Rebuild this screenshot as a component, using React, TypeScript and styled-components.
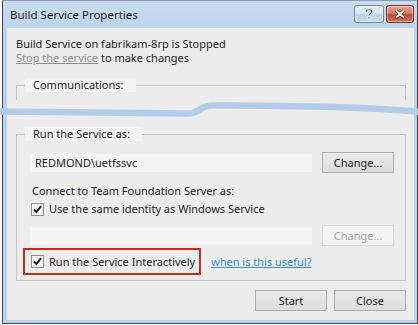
import React from 'react';
import styled, { createGlobalStyle } from 'styled-components';

const GlobalStyle = createGlobalStyle`
  html, body {
    margin: 0;
    padding: 0;
    background: #ffffff;
  }
  body {
    font-family: 'Noto Sans', 'Open Sans', sans-serif;
    font-size: 11px;
    color: #1e1e1e;
  }
`;

const Page = styled.div`
  position: relative;
  width: 418px;
  height: 325px;
  overflow: hidden;
`;

const Window = styled.div`
  box-sizing: border-box;
  margin-left: 2px;
  width: 416px;
  height: 324px;
  border: 1px solid #3c4654;
  border-top-color: #8c9db3;
  padding: 0 3px 3px 4px;
  display: flex;
  flex-direction: column;
  background: linear-gradient(#c9dcf1, #bcd2ec 30px, #bcd2ec);
`;

const TitleBar = styled.div`
  height: 27px;
  display: flex;
  align-items: flex-start;
`;

const Title = styled.div`
  padding: 6px 0 0 3px;
  line-height: 15px;
  font-size: 11.5px;
  color: #1e1e1e;
`;

const Caption = styled.div`
  margin-left: auto;
  margin-top: 4px;
  display: flex;
  gap: 2px;
`;

const CaptionButton = styled.div<{ $danger?: boolean }>`
  box-sizing: border-box;
  width: ${(p) => (p.$danger ? 28 : 30)}px;
  height: 18px;
  border: 1px solid ${(p) => (p.$danger ? '#7a3024' : '#6f86a3')};
  border-radius: 3px;
  display: flex;
  align-items: center;
  justify-content: center;
  background: ${(p) =>
    p.$danger
      ? 'linear-gradient(#e7a894, #d57a62 45%, #c34a33 55%, #d27055)'
      : 'linear-gradient(#e6eff9, #d4e2f3 45%, #bfd1e8 55%, #cbdcef)'};
  box-shadow: inset 0 0 0 1px rgba(255, 255, 255, 0.45);
`;

const Client = styled.div`
  flex: 1;
  background: #ececec;
  display: flex;
  flex-direction: column;
`;

const Status = styled.div`
  padding: 9px 0 0 9px;
  line-height: 14px;
`;

const MutedLink = styled.span`
  color: #8d8d8d;
  text-decoration: underline;
`;

const Group = styled.fieldset<{ $open?: boolean }>`
  margin: ${(p) => (p.$open ? '13px' : '27px')} 8px 0 9px;
  padding: 0;
  min-width: 0;
  border: 1px solid #c3c3c3;
  border-bottom: ${(p) => (p.$open ? 'none' : '1px solid #c3c3c3')};
  ${(p) => (p.$open ? 'height: 21px;' : '')}
`;

const Legend = styled.legend`
  margin-left: 8px;
  padding: 0 12px 0 8px;
  line-height: 14px;
  background: #f3f3f3;
`;

const FieldRow = styled.div<{ $top: number }>`
  display: flex;
  align-items: center;
  gap: 10px;
  margin-top: ${(p) => p.$top}px;
  padding-left: 13px;
`;

const TextField = styled.div<{ $disabled?: boolean }>`
  box-sizing: border-box;
  width: 282px;
  height: 18px;
  padding-left: 5px;
  line-height: 18px;
  background: #f5f5f5;
  color: ${(p) => (p.$disabled ? '#a0a0a0' : '#1e1e1e')};
`;

const Button = styled.div<{ $disabled?: boolean }>`
  box-sizing: border-box;
  width: 72px;
  height: 21px;
  display: flex;
  align-items: center;
  justify-content: center;
  border: 1px solid ${(p) => (p.$disabled ? '#d9d9d9' : '#acacac')};
  background: ${(p) => (p.$disabled ? '#f4f4f4' : 'linear-gradient(#e9e9e9, #dcdcdc)')};
  color: ${(p) => (p.$disabled ? '#a3a3a3' : '#1e1e1e')};
`;

const Caption2 = styled.div`
  margin-top: 10px;
  padding-left: 15px;
  line-height: 16px;
`;

const CheckRow = styled.label`
  display: flex;
  align-items: center;
  gap: 5px;
  line-height: 16px;
  white-space: nowrap;
`;

const IdentityRow = styled(CheckRow)`
  margin-top: 2px;
  padding-left: 14px;
`;

const Box = styled.span`
  box-sizing: border-box;
  flex: none;
  width: 13px;
  height: 13px;
  border: 1px solid #8f8f8f;
  background: linear-gradient(#f0f0f0, #ffffff);
  display: flex;
  align-items: center;
  justify-content: center;
`;

const BottomRow = styled.div`
  display: flex;
  align-items: center;
  gap: 10px;
  margin: 2px 0 5px 6px;
`;

const Highlight = styled.div`
  box-sizing: border-box;
  width: 178px;
  height: 27px;
  border: 2px solid #bf2f1c;
  padding-left: 6px;
  display: flex;
  align-items: center;
`;

const HelpLink = styled.span`
  color: #3b8de0;
  text-decoration: underline;
`;

const Actions = styled.div`
  display: flex;
  justify-content: flex-end;
  gap: 7px;
  margin: 9px 8px 0 0;
`;

const Tear = styled.svg`
  position: absolute;
  left: 0;
  top: 98px;
`;

const Check: React.FC = () => (
  <Box>
    <svg width="11" height="11" viewBox="0 0 11 11">
      <path d="M2 5.5 L4.4 8 L9 2.2" fill="none" stroke="#1c1c1c" strokeWidth="2" />
    </svg>
  </Box>
);

const App: React.FC = () => (
  <Page>
    <GlobalStyle />
    <Window>
      <TitleBar>
        <Title>Build Service Properties</Title>
        <Caption>
          <CaptionButton>
            <svg width="10" height="12" viewBox="0 0 10 12">
              <path
                d="M2.2 3.6 C2.2 1.2 7.8 1.2 7.8 3.6 C7.8 5.4 5 5.4 5 7.4"
                fill="none"
                stroke="#ffffff"
                strokeWidth="2.4"
              />
              <path
                d="M2.2 3.6 C2.2 1.2 7.8 1.2 7.8 3.6 C7.8 5.4 5 5.4 5 7.4"
                fill="none"
                stroke="#5d6d82"
                strokeWidth="1.1"
              />
              <rect x="4" y="8.8" width="2" height="2" fill="#5d6d82" stroke="#ffffff" strokeWidth="0.6" />
            </svg>
          </CaptionButton>
          <CaptionButton $danger>
            <svg width="12" height="10" viewBox="0 0 12 10">
              <path d="M2 1.5 L10 8.5 M10 1.5 L2 8.5" stroke="#5a1a10" strokeWidth="3.4" />
              <path d="M2 1.5 L10 8.5 M10 1.5 L2 8.5" stroke="#ffffff" strokeWidth="2" />
            </svg>
          </CaptionButton>
        </Caption>
      </TitleBar>
      <Client>
        <Status>
          Build Service on fabrikam-8rp is Stopped
          <br />
          <MutedLink>Stop the service</MutedLink> to make changes
        </Status>

        <Group $open>
          <Legend>Communications:</Legend>
        </Group>

        <Group>
          <Legend>Run the Service as:</Legend>
          <FieldRow $top={11}>
            <TextField>REDMOND\uetfssvc</TextField>
            <Button>Change...</Button>
          </FieldRow>
          <Caption2>Connect to Team Foundation Server as:</Caption2>
          <IdentityRow>
            <Check />
            Use the same identity as Windows Service
          </IdentityRow>
          <FieldRow $top={8}>
            <TextField $disabled />
            <Button $disabled>Change...</Button>
          </FieldRow>
          <BottomRow>
            <Highlight>
              <CheckRow>
                <Check />
                Run the Service Interactively
              </CheckRow>
            </Highlight>
            <HelpLink>when is this useful?</HelpLink>
          </BottomRow>
        </Group>

        <Actions>
          <Button>Start</Button>
          <Button>Close</Button>
        </Actions>
      </Client>
    </Window>
    <Tear width="418" height="22" viewBox="0 0 418 22">
      <path
        d="M-2 13.5 C80 14 150 15.5 188 15.5 C200 15.5 198 8 212 7.5 C300 7 380 10 420 14"
        fill="none"
        stroke="#b5cce8"
        strokeWidth="6.5"
      />
    </Tear>
  </Page>
);

export default App;
